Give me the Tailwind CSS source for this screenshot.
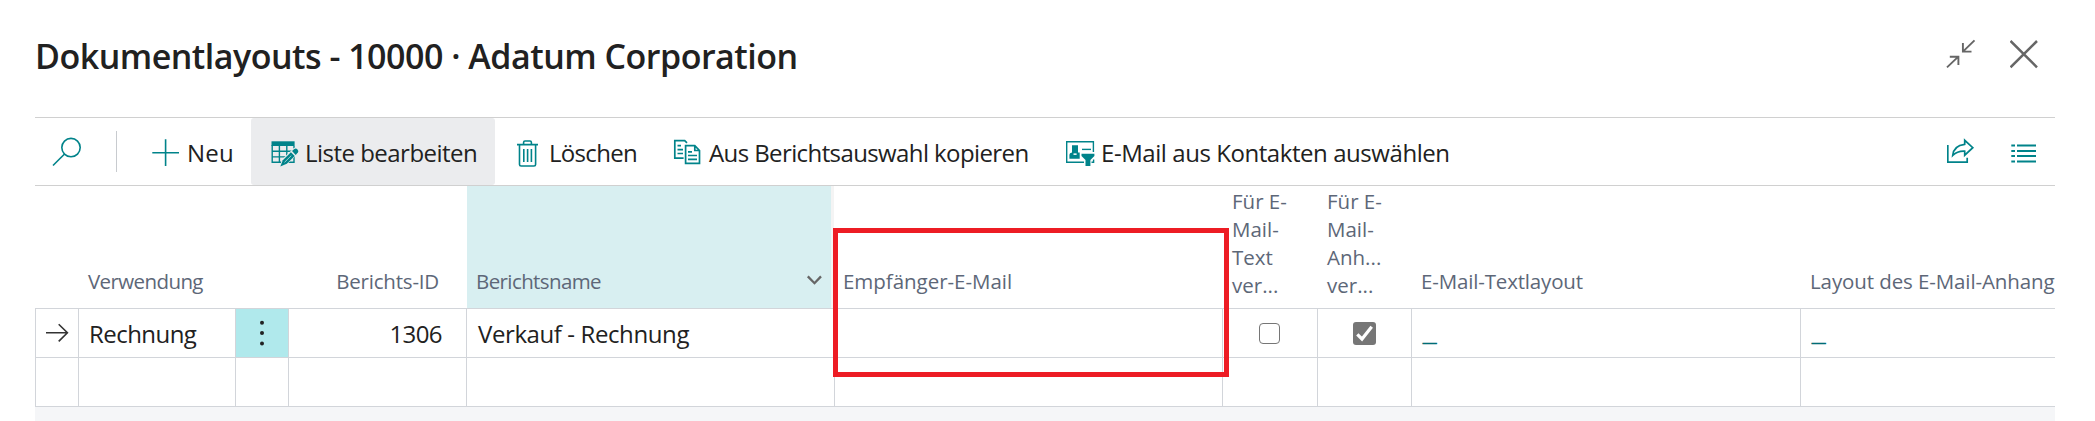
<!DOCTYPE html>
<html lang="de">
<head>
<meta charset="utf-8">
<title>Dokumentlayouts</title>
<script src="https://cdn.jsdelivr.net/npm/@tailwindcss/browser@4"></script>
</head>
<body class="bg-white font-['Open_Sans',sans-serif] text-[#212121]">
<div class="relative flex h-[421px] w-[2095px] flex-col overflow-hidden pl-[35px] pr-[40px]">

  <!-- Title bar -->
  <header class="flex h-[117px] shrink-0 items-start justify-between">
    <h1 class="pt-[32px] text-[34px] leading-[48px] font-semibold tracking-[-0.5px] whitespace-nowrap">Dokumentlayouts - 10000 · Adatum Corporation</h1>
    <div class="flex gap-[34px] pt-[39px] pr-[17px] text-[#666]">
      <svg class="h-[30px] w-[30px]" viewBox="1946 39 30 30" fill="none" stroke="currentColor" stroke-width="1.9"><path d="M1947 67.4 1958.3 56.6M1949.8 56.7H1958.4V65M1974.5 40.4 1963.2 51.4M1962.9 43V51.6H1971.5"/></svg>
      <svg class="h-[30px] w-[28px]" viewBox="2010 39 28 30" fill="none" stroke="currentColor" stroke-width="2.5"><path d="M2010.5 41 2037 67.3M2037 41 2010.5 67.3"/></svg>
    </div>
  </header>

  <!-- Action bar -->
  <nav class="flex h-[69px] shrink-0 items-center border-y border-[#d0d0d0] text-[24px] leading-[32px] whitespace-nowrap">
    <div class="flex w-[81px] pl-[16px]">
      <svg class="h-[32px] w-[32px] text-[#00838a]" viewBox="51 136 32 32" fill="none" stroke="currentColor" stroke-width="1.6"><circle cx="71" cy="147.6" r="9.2"/><path d="M53 165.5 64.3 154.3"/></svg>
    </div>
    <div class="h-[41px] w-px bg-[#c8cbcf]"></div>
    <div class="flex h-full w-[134px] items-center pl-[33px]">
      <svg class="h-[32px] w-[32px] text-[#00838a]" viewBox="150 136 32 32" fill="none" stroke="currentColor" stroke-width="1.6"><path d="M165.6 139.3V166M152.3 152.8H179"/></svg>
      <span class="pt-[2px] pl-[5px] tracking-[0.2px]">Neu</span>
    </div>
    <div class="flex h-full w-[244px] items-center rounded-[3px] bg-[#ebecee] pl-[18px]">
      <svg class="h-[32px] w-[32px] text-[#00838a]" viewBox="269 136 32 32" fill="none" stroke="currentColor" stroke-width="1.4">
        <path d="M271.5 141.3H294.6V146H271.5z" fill="currentColor" stroke="none"/>
        <path d="M272.2 145V162.3H294V146M279.4 145V162.3M286.8 145V162.3M272 151.2H294M272 156.9H294"/>
        <path d="M279.8 167.3 281.7 159.7 293.6 148.2Q296.2 146.6 298.4 149.2 299.9 151.4 298.2 153.2L286.5 164.7z" fill="#ebecee" stroke="none"/>
        <path d="M280.3 166.4 282.8 160.2 290.9 152.2 294.7 156 286.8 163.8z" fill="currentColor" stroke="none"/>
        <path d="M292 151.1 294.3 149Q296 147.9 297.7 149.7 298.9 151.2 297.9 152.6L295.7 154.9z" fill="currentColor" stroke="none"/>
        <path d="M284.5 162.3 291.3 155.6" stroke="#9fd0d3" stroke-width="1"/>
      </svg>
      <span class="pt-[2px] pl-[4px] tracking-[-0.52px]">Liste bearbeiten</span>
    </div>
    <div class="flex h-full w-[157px] items-center pl-[17px]">
      <svg class="h-[32px] w-[32px] text-[#00838a]" viewBox="512 136 32 32" fill="none" stroke="currentColor" stroke-width="1.6"><path d="M517 144.6H538M523.6 144V142.4Q523.6 141 525 141H530Q531.4 141 531.4 142.4V144M519.5 145V164.4Q519.5 166 521.1 166H534Q535.6 166 535.6 164.4V145"/><path d="M523.8 149V162M527.6 149V162M531.4 149V162"/></svg>
      <span class="pt-[2px] pl-[5px] tracking-[-0.68px]">Löschen</span>
    </div>
    <div class="flex h-full w-[393px] items-center pl-[19px]">
      <svg class="h-[32px] w-[32px] text-[#00838a]" viewBox="671 136 32 32" fill="none" stroke="currentColor" stroke-width="1.7"><path d="M683.6 158.2H674.8V140.6H684.7L687 142.8"/><path d="M677.5 145.7H681M677.5 149.6H683M677.5 153.5H683"/><path d="M685.6 145.6H694.8L699.5 150.5V163.4H685.6zM694.8 145.6V150.5H699.5"/><path d="M688 151.8H692M688 155.5H697M688 159.3H697"/></svg>
      <span class="pt-[2px] pl-[6px] tracking-[-0.6px]">Aus Berichtsauswahl kopieren</span>
    </div>
    <div class="flex h-full w-[420px] items-center pl-[19px]">
      <svg class="h-[32px] w-[32px] text-[#00838a]" viewBox="1064 136 32 32" fill="none" stroke="currentColor" stroke-width="1.4"><path d="M1093.4 152V141.8H1066.7V162.3H1084M1091.5 162.3H1093.6V159.5"/><path d="M1072 145.2H1078V152.6H1079.7V158.7H1069.4V154.8Q1069.4 153 1072 152.6z" fill="currentColor" stroke="none"/><path d="M1073.5 153.4H1076.6V154.9H1073.5z" fill="#fff" stroke="none"/><path d="M1082 149.4H1091"/><path d="M1081.5 153.8H1094.4V156.1L1090.4 160V166H1085.5V160L1081.5 156.1z" fill="currentColor" stroke="none"/></svg>
      <span class="pt-[2px] pl-[5px] tracking-[-0.44px]">E-Mail aus Kontakten auswählen</span>
    </div>
    <div class="ml-auto flex gap-[32px] pr-[16px] text-[#00838a]">
      <svg class="h-[32px] w-[30px]" viewBox="1947 136 30 32" fill="none" stroke="currentColor" stroke-width="1.7"><path d="M1947.8 145V162.2H1967.2V157.8"/><path d="M1952.7 155.5Q1953.6 145.5 1964.7 144.3V140.3L1972.8 147.7 1964.7 155.2V151.2Q1957.5 150.8 1952.7 155.5z"/></svg>
      <svg class="h-[32px] w-[30px]" viewBox="2009 136 30 32" fill="none" stroke="currentColor" stroke-width="2"><path d="M2011.3 145.6H2015M2017 145.6H2036M2011.3 150.9H2015M2017 150.9H2036M2011.3 156.1H2015M2017 156.1H2036M2011.3 161.4H2015M2017 161.4H2036"/></svg>
    </div>
  </nav>

  <!-- Column headings -->
  <div class="grid h-[122px] shrink-0 grid-cols-[43px_157px_53px_178px_368px_388px_95px_94px_389px_255px] text-[20.5px] leading-[28px] whitespace-nowrap text-[#5d6778]">
    <div></div>
    <div class="flex items-end pb-[13px] pl-[10px] tracking-[-0.6px]">Verwendung</div>
    <div></div>
    <div class="flex items-end justify-end pr-[27px] pb-[13px] tracking-[-0.2px]">Berichts-ID</div>
    <div class="ml-px flex items-end justify-between border-r-[3px] border-[#f4f4f4] bg-[#d8eff1] pb-[13px] pl-[9px]">
      <span class="tracking-[-0.6px]">Berichtsname</span>
      <svg class="mr-[9px] h-[28px] w-[16px] text-[#666]" viewBox="806 267 16 28" fill="none" stroke="currentColor" stroke-width="2.3"><path d="M807.8 276.4 814.5 283.2 821 276.4"/></svg>
    </div>
    <div class="flex items-end pb-[13px] pl-[9px] tracking-[-0.03px]">Empfänger-E-Mail</div>
    <div class="flex items-end pb-[9px] pl-[10px]"><span>Für E-<br>Mail-<br>Text<br>ver...</span></div>
    <div class="flex items-end pb-[9px] pl-[10px]"><span>Für E-<br>Mail-<br>Anh...<br>ver...</span></div>
    <div class="flex items-end pb-[13px] pl-[10px] tracking-[-0.16px]">E-Mail-Textlayout</div>
    <div class="flex items-end overflow-hidden pb-[13px] pl-[10px] tracking-[-0.1px]">Layout des E-Mail-Anhang</div>
  </div>

  <!-- Selected row -->
  <div class="grid h-[49px] shrink-0 grid-cols-[43px_157px_53px_178px_368px_388px_95px_94px_389px_255px] border-t border-[#d2d5da] text-[24px] leading-[32px] whitespace-nowrap *:border-l *:border-[#d2d5da]">
    <div class="flex items-center pl-[9px]">
      <svg class="h-[24px] w-[24px]" viewBox="45 322 24 24" fill="none" stroke="#333" stroke-width="1.6"><path d="M46 333.8H67.2M58.7 325.2 67.4 333.8 58.7 342.4"/></svg>
    </div>
    <div class="flex items-center pt-px pl-[10px] tracking-[-0.55px]">Rechnung</div>
    <div class="flex items-center justify-center bg-[#b0e9ec]">
      <svg class="h-[28px] w-[8px]" viewBox="258 320.5 8 28" fill="#222"><circle cx="262" cy="324.2" r="2"/><circle cx="262" cy="334.6" r="2"/><circle cx="262" cy="345" r="2"/></svg>
    </div>
    <div class="flex items-center justify-end pt-px pr-[24px] tracking-[-0.6px]">1306</div>
    <div class="flex items-center pt-px pl-[11px] tracking-[-0.4px]">Verkauf - Rechnung</div>
    <div></div>
    <div class="flex items-center justify-center pr-px">
      <div class="h-[21px] w-[21px] rounded-[4px] border-[1.6px] border-[#767676] bg-white"></div>
    </div>
    <div class="flex items-center justify-center">
      <svg class="h-[23px] w-[23px]" viewBox="0 0 23 23" fill="none"><rect width="23" height="23" rx="3" fill="#767676"/><path d="M4.3 12.3 9 17 18.7 4.8" stroke="#fff" stroke-width="3.2"/></svg>
    </div>
    <div class="flex items-center pl-[11px] font-['Liberation_Sans',sans-serif] text-[24px] font-bold text-[#006d75] [-webkit-text-stroke:0.8px_#006d75]">_</div>
    <div class="flex items-center pl-[11px] font-['Liberation_Sans',sans-serif] text-[24px] font-bold text-[#006d75] [-webkit-text-stroke:0.8px_#006d75]">_</div>
  </div>

  <!-- Empty row -->
  <div class="grid h-[50px] shrink-0 grid-cols-[43px_157px_53px_178px_368px_388px_95px_94px_389px_255px] border-y border-[#d2d5da] *:border-l *:border-[#d2d5da]">
    <div></div><div></div><div></div><div></div><div></div><div></div><div></div><div></div><div></div><div></div>
  </div>
  <div class="flex-1 bg-[#f5f6f8]"></div>

  <!-- Highlight frame over the recipient column -->
  <div class="absolute top-[228px] left-[833px] h-[149px] w-[396px] border-[5px] border-[#ed1c24]"></div>
</div>
</body>
</html>
